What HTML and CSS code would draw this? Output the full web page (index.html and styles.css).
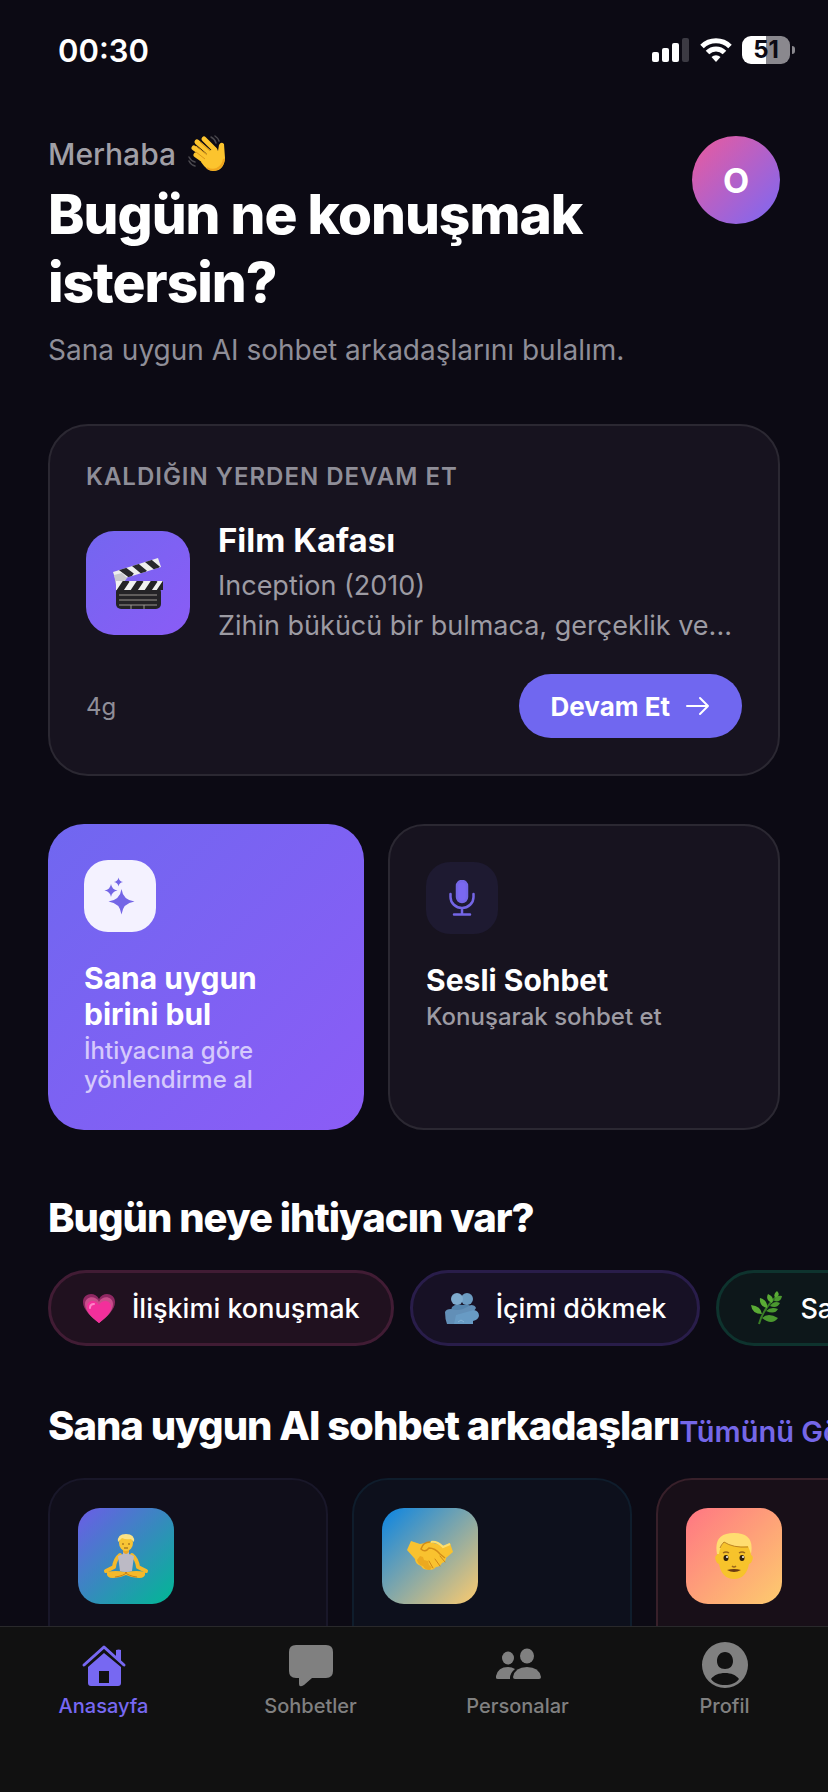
FILE: index.html
```html
<!DOCTYPE html>
<html lang="tr">
<head>
    <meta charset="UTF-8">
    <meta name="viewport" content="width=device-width, initial-scale=1.0">
    <title>Anasayfa</title>
    <link rel="stylesheet" href="styles.css">
</head>
<body>
    <div class="app">
        <div class="status-bar">
            <span class="time">00:30</span>
            <div class="status-icons">
                <svg width="38" height="24" viewBox="0 0 38 24" fill="#fff">
                    <rect x="0" y="14" width="7" height="10" rx="2"/>
                    <rect x="10" y="10" width="7" height="14" rx="2"/>
                    <rect x="20" y="5" width="7" height="19" rx="2"/>
                    <rect x="30" y="0" width="7" height="24" rx="2" fill="#3c3a43"/>
                </svg>
                <svg width="32" height="26" viewBox="0 0 32 26" fill="none" stroke="#fff" stroke-width="5">
                    <path d="M2 9.500a20 20 0 0 1 28 0"/>
                    <path d="M7.500 15.500a12 12 0 0 1 17 0"/>
                    <path d="M16 25l-4.500-5a6.500 6.500 0 0 1 9 0z" fill="#fff" stroke="none"/>
                </svg>
                <div class="battery"><span>51</span></div>
            </div>
        </div>

        <main>
            <header class="header">
                <div>
                    <p class="hello">Merhaba
                        <svg width="38" height="38" viewBox="0 0 38 38">
                            <path d="M27 15L16 4M23 19L9 7M20 23L6 13M18 27L8 20" stroke="#fcc42e" stroke-width="5" fill="none" stroke-linecap="round"/>
                            <path d="M17 20L27 12l3 4 1-6q2-4 5-1l1 14q-1 13-12 13-6 0-12-9z" fill="#fcc42e"/>
                            <path d="M22 16L12 7M19 20L8 11M17 24L8 17" stroke="#dc9718" stroke-width="1" fill="none"/>
                            <path d="M19 33q5 3 10 1 6-3 7-10" stroke="#f0a51d" stroke-width="2" fill="none"/>
                            <path d="M23 2q4 2 5 6M27 1q3 2 4 5M1 26q2 4 6 5M1 22q2 4 6 5" stroke="#4a484e" stroke-width="1.500" fill="none" stroke-linecap="round"/>
                        </svg>
                    </p>
                    <h1>Bugün ne konuşmak istersin?</h1>
                    <p class="subtitle">Sana uygun AI sohbet arkadaşlarını bulalım.</p>
                </div>
                <button class="avatar">O</button>
            </header>

            <section class="continue card">
                <h2 class="label">KALDIĞIN YERDEN DEVAM ET</h2>
                <div class="continue-body">
                    <div class="film-icon">
                        <svg width="52" height="56" viewBox="0 0 52 56">
                            <defs>
                                <clipPath id="clap-top"><path d="M1 17L46 3l3 9L4 26z"/></clipPath>
                                <clipPath id="clap-bar"><rect x="4" y="26" width="47" height="9"/></clipPath>
                            </defs>
                            <path d="M1 17L46 3l3 9L4 26z" fill="#eee"/>
                            <path d="M8 12l12 9M21 8l12 10M34 4l12 10" stroke="#29292d" stroke-width="6" clip-path="url(#clap-top)"/>
                            <path d="M2 20l8-2 5 5-5 7H4z" fill="#c9c9ce"/>
                            <rect x="4" y="32" width="45" height="22" rx="5" fill="#242326"/>
                            <g clip-path="url(#clap-bar)">
                                <rect x="4" y="26" width="47" height="9" fill="#f1f1f1"/>
                                <path d="M7 37l8-12M21 37l8-12M35 37l8-12M47 37l8-12" stroke="#242326" stroke-width="6"/>
                            </g>
                            <path d="M7 40h38M7 45h38M7 50h38M19 50v4M32 50v4" stroke="#9b9790" stroke-width="1"/>
                        </svg>
                    </div>
                    <div class="continue-text">
                        <h3>Film Kafası</h3>
                        <p>Inception (2010)</p>
                        <p>Zihin bükücü bir bulmaca, gerçeklik ve...</p>
                    </div>
                </div>
                <div class="continue-footer">
                    <span class="ago">4g</span>
                    <button class="continue-btn">Devam Et
                        <svg width="24" height="20" viewBox="0 0 24 20" fill="none" stroke="#fff" stroke-width="2" stroke-linecap="round" stroke-linejoin="round">
                            <path d="M1 10h21M14 2l8 8-8 8"/>
                        </svg>
                    </button>
                </div>
            </section>

            <section class="actions">
                <a href="#" class="action primary">
                    <span class="action-icon">
                        <svg width="40" height="40" viewBox="0 0 40 40" fill="#7466e6">
                            <path d="M21.500 13q1.500 11 13 12.500q-11.500 1.500-13 13q-1.500-11.500-13-13q11.500-1.500 13-12.500z"/>
                            <path d="M11 8q.8 5.500 6.500 6.500q-5.700 1-6.500 6.500q-.8-5.500-6.500-6.500q5.700-1 6.500-6.500z"/>
                            <path d="M18.500 1.500q.6 3.800 4.500 4.500q-3.900.7-4.500 4.500q-.6-3.800-4.500-4.500q3.900-.7 4.500-4.500z"/>
                        </svg>
                    </span>
                    <h3>Sana uygun birini bul</h3>
                    <p>İhtiyacına göre yönlendirme al</p>
                </a>
                <a href="#" class="action card">
                    <span class="action-icon">
                        <svg width="26" height="36" viewBox="0 0 26 36" fill="none" stroke="#7466e6" stroke-width="2.500" stroke-linecap="round">
                            <rect x="8" y="1" width="10" height="21" rx="5" fill="#7a68f0"/>
                            <path d="M1.500 14v3a11.500 11 0 0 0 23 0v-3M13 28v6M5 34.500h16"/>
                        </svg>
                    </span>
                    <h3>Sesli Sohbet</h3>
                    <p>Konuşarak sohbet et</p>
                </a>
            </section>

            <h2 class="section-title needs-title">Bugün neye ihtiyacın var?</h2>
            <div class="chips">
                <button class="chip pink">
                    <svg width="34" height="34" viewBox="0 0 34 34">
                        <path d="M17 32C9 25 1 19 1 11c0-9 12-11 16-3 4-8 16-6 16 3 0 8-8 14-16 21z" fill="#8e2862"/>
                        <path d="M17 32C9 26 3 20 3 13c0-8 11-9 14-2 3-7 14-6 14 2 0 7-6 13-14 19z" fill="#c94d8b"/>
                        <path d="M17 32C10 26 5 22 5 16c0-7 9-8 12-2 3-6 12-5 12 2 0 6-5 10-12 16z" fill="#f32f9b"/>
                        <path d="M8 17q0-4 4-4" stroke="#ff83c8" stroke-width="2" fill="none" stroke-linecap="round"/>
                    </svg>
                    İlişkimi konuşmak
                </button>
                <button class="chip violet">
                    <svg width="36" height="34" viewBox="0 0 36 34">
                        <path d="M8 16q4-4 10-2 7-2 11 3l2 9H5z" fill="#5484ad"/>
                        <circle cx="23" cy="8" r="6" fill="#6c9cc2"/>
                        <circle cx="13" cy="8" r="6" fill="#7eabce"/>
                        <path d="M1 21q1-3 6-3 6 2 12 0l8-4q4 0 5 3-2 4-9 6l-6 4v6H3q-2-5-2-12z" fill="#628fb7"/>
                        <path d="M12 24l18-5q5 1 5 6-1 4-6 5v3H10z" fill="#689bc4"/>
                        <path d="M14 31l3-2 3 2" stroke="#86b4d5" fill="none"/>
                    </svg>
                    İçimi dökmek
                </button>
                <button class="chip green">
                    <svg width="34" height="34" viewBox="0 0 34 34" fill="#5aab35">
                        <path d="M9 33Q13 18 27 5" stroke="#397d26" stroke-width="2" fill="none"/>
                        <path d="M26 7q-4-3 1-7 4 4-1 7zM22 12q-7-3-4-9 7 3 4 9zM17 17q-8-2-7-10 8 2 7 10zM12 23q-10 0-11-9 10 1 11 9z"/>
                        <path d="M24 10q2-6 8-5-1 7-8 5zM20 15q4-6 10-3-3 6-10 3zM16 20q5-5 12-2-3 6-12 2zM12 27q6-6 16 0-6 8-16 0z" fill="#4b982f"/>
                    </svg>
                    Sakinleşmek
                </button>
            </div>

            <div class="section-head">
                <h2 class="section-title">Sana uygun AI sohbet arkadaşları</h2>
                <a href="#">Tümünü Gör</a>
            </div>
            <div class="personas">
                <article class="persona indigo">
                    <div class="persona-icon">
                        <svg width="46" height="46" viewBox="0 0 46 46">
                            <path d="M17 22Q12 26 11 34L3 38M29 22Q34 26 35 34l8 4" stroke="#f5b92b" stroke-width="4" fill="none" stroke-linecap="round" stroke-linejoin="round"/>
                            <path d="M4 39q8-2 19 0 11-2 19 0 1 6-6 6-7 0-13-3-6 3-13 3-7 0-6-6z" fill="#f5b92b"/>
                            <path d="M12 44q9-1 12-5M34 44q-9-1-12-5" stroke="#c98018" fill="none"/>
                            <path d="M20 16h6v5l5 2-2 15q-6 2-12 0l-2-15 5-2z" fill="#bcbac5"/>
                            <path d="M20 15h6v4q-3 4-6 0z" fill="#e9a825"/>
                            <ellipse cx="23" cy="10" rx="7" ry="8" fill="#f7c535"/>
                            <path d="M15 9Q14 1 23 1t8 8l-3-3q-5 1-9-1z" fill="#fce385"/>
                            <path d="M19 11h2M25 11h2M21 15h4" stroke="#8b5a18"/>
                        </svg>
                    </div>
                </article>
                <article class="persona blue">
                    <div class="persona-icon">
                        <svg width="48" height="34" viewBox="0 0 48 34">
                            <path d="M5 2l9 3 10-2 14 4 6-3 3 9-7 6q0 4-4 5-2 4-6 4-3 4-7 2-5 2-8-3-6-2-6-7L1 11z" fill="#f9c22f"/>
                            <path d="M34 17l5 6M29 20l5 7M23 22l4 7" stroke="#cf8617" stroke-width="1" stroke-linecap="round"/>
                            <path d="M11 21l3-4 3 1 1 3 4 1 1 4 3 2-2 3q-5 0-7-4-5-1-6-6z" fill="#eca920"/>
                            <path d="M24 3q-7 0-9 7 4 4 8-1 6 0 11 6l5 4" stroke="#d38d17" stroke-width="1.500" fill="none"/>
                            <path d="M25 3q6-1 12 5l7-3" stroke="#ffdf6c" stroke-width="2" fill="none"/>
                        </svg>
                    </div>
                </article>
                <article class="persona red">
                    <div class="persona-icon">
                        <svg width="40" height="48" viewBox="0 0 40 48">
                            <path d="M3 15q0-13 17-13t17 13v8q3 1 1 6-1 3-3 3-3 15-15 15T5 32q-2 0-3-3-2-5 1-6z" fill="#f7c32b"/>
                            <path d="M3 22Q-1 1 20 1t17 21l-3-8Q19 16 10 10q-4 5-5 12z" fill="#ffdd70"/>
                            <path d="M6 16q1-3 4-6 9 6 24 5" stroke="#bd8421" fill="none"/>
                            <ellipse cx="12" cy="26" rx="2.500" ry="3" fill="#30200c"/>
                            <ellipse cx="28" cy="26" rx="2.500" ry="3" fill="#30200c"/>
                            <circle cx="13" cy="25" r="1" fill="#fff"/>
                            <circle cx="29" cy="25" r="1" fill="#fff"/>
                            <path d="M9 21q3-2 6 0M25 21q3-2 6 0M18 34q2 2 4 0" stroke="#9b681c" stroke-width="1.500" fill="none"/>
                            <path d="M13 38q7-2 14 0-7 4-14 0z" fill="#6b3c12"/>
                        </svg>
                    </div>
                </article>
            </div>
        </main>

        <nav class="tab-bar">
            <a href="#" class="active">
                <svg width="48" height="48" viewBox="0 0 48 48" fill="currentColor">
                    <path d="M4 24L24 6l20 18" fill="none" stroke="currentColor" stroke-width="3" stroke-linecap="round" stroke-linejoin="round"/>
                    <path d="M36 9q3-1 5 0v12l-5-4z"/>
                    <path fill-rule="evenodd" d="M8 26L24 12l17 14v16q0 3-3 3H11q-3 0-3-3zm11 4v12h10V30z"/>
                </svg>
                Anasayfa
            </a>
            <a href="#">
                <svg width="48" height="48" viewBox="0 0 48 48" fill="currentColor">
                    <path d="M9 4h30q7 0 7 7v19q0 7-7 7H25l-8 7q-5 3-5-1v-6H9q-7 0-7-7V11q0-7 7-7z"/>
                </svg>
                Sohbetler
            </a>
            <a href="#">
                <svg width="48" height="48" viewBox="0 0 48 48" fill="currentColor">
                    <ellipse cx="14" cy="17" rx="6" ry="6.500"/>
                    <ellipse cx="33" cy="15" rx="7" ry="7.500"/>
                    <path d="M2 37v-2q2-9 12-9 4 0 7 2-5 4-5 9v1H4q-2 0-2-1z"/>
                    <path d="M19 36q2-10 14-10t14 10q0 2-2 2H21q-2 0-2-2z"/>
                </svg>
                Personalar
            </a>
            <a href="#">
                <svg width="48" height="48" viewBox="0 0 48 48" fill="currentColor">
                    <path fill-rule="evenodd" d="M24 1a23 23 0 1 0 0 46 23 23 0 0 0 0-46zm0 10c5 0 8 4 8 9s-3 8-8 8-8-3-8-8 3-9 8-9zm0 21c6 0 11 2 14 6-3 4-8 6-14 6s-11-2-14-6c3-4 8-6 14-6z"/>
                </svg>
                Profil
            </a>
        </nav>
    </div>
</body>
</html>
```
FILE: styles.css
```css
* {
    box-sizing: border-box;
}
body, html {
    height: 100%;
    margin: 0;
}
body {
    background-color: #0c0a14;
    color: #fff;
    font-family: Inter, 'Noto Sans', sans-serif;
}
h1, h2, h3, p {
    margin: 0;
}
a {
    color: inherit;
    text-decoration: none;
}
button {
    border: none;
    color: #fff;
    font-family: inherit;
    cursor: pointer;
}
svg {
    flex-shrink: 0;
}
.app {
    height: 100vh;
    display: flex;
    flex-direction: column;
}
.status-bar {
    display: flex;
    justify-content: space-between;
    align-items: center;
    height: 100px;
    padding: 0 32px 0 58px;
    flex-shrink: 0;
}
.time {
    font-size: 31px;
    font-weight: 600;
}
.status-icons {
    display: flex;
    align-items: center;
    gap: 10px;
}
.battery {
    position: relative;
    width: 48px;
    height: 28px;
    margin-right: 6px;
    border-radius: 9px;
    background: linear-gradient(to right, #fff 50%, #8a888e 50%);
    color: #0c0a14;
    font-size: 24px;
    font-weight: 700;
    line-height: 28px;
    text-align: center;
}
.battery::after {
    content: '';
    position: absolute;
    right: -5px;
    top: 10px;
    width: 3px;
    height: 8px;
    border-radius: 0 4px 4px 0;
    background-color: #8a888e;
}
main {
    flex: 1;
    min-height: 0;
    overflow: hidden;
    padding: 36px 48px 0;
}

/* header */
.header {
    display: flex;
    justify-content: space-between;
    align-items: flex-start;
    margin-bottom: 54px;
}
.hello {
    display: flex;
    align-items: center;
    gap: 12px;
    height: 36px;
    color: #a09fa6;
    font-size: 30px;
    font-weight: 500;
}
h1 {
    font-size: 55px;
    font-weight: 800;
    line-height: 68px;
    letter-spacing: -1px;
    padding-top: 8px;
}
.subtitle {
    padding-top: 14px;
    color: #8f8e98;
    font-size: 28px;
    line-height: 40px;
}
.avatar {
    flex-shrink: 0;
    width: 88px;
    height: 88px;
    padding: 0;
    border-radius: 50%;
    background: linear-gradient(135deg, #ec5a9c, #7a68f5);
    font-size: 34px;
    font-weight: 700;
}

/* continue card */
.card {
    border: 2px solid #2b2832;
    background-color: #17131f;
}
.continue {
    padding: 36px;
    border-radius: 40px;
    margin-bottom: 48px;
}
.label {
    color: #8f8e98;
    font-size: 24px;
    font-weight: 600;
    line-height: 30px;
    letter-spacing: 1px;
}
.continue-body {
    display: flex;
    align-items: center;
    gap: 28px;
    margin: 28px 0;
}
.film-icon {
    display: flex;
    justify-content: center;
    align-items: center;
    flex-shrink: 0;
    width: 104px;
    height: 104px;
    border-radius: 28px;
    background: linear-gradient(135deg, #7466f0, #8a5cf6);
}
.continue-text {
    flex: 1;
    min-width: 0;
}
.continue-text h3 {
    margin-bottom: 6px;
    font-size: 33px;
    font-weight: 700;
    line-height: 40px;
}
.continue-text p {
    color: #9d9ba3;
    font-size: 27px;
    line-height: 40px;
    white-space: nowrap;
    overflow: hidden;
    text-overflow: ellipsis;
}
.continue-footer {
    display: flex;
    justify-content: space-between;
    align-items: center;
}
.ago {
    color: #8f8e98;
    font-size: 24px;
}
.continue-btn {
    display: flex;
    align-items: center;
    gap: 16px;
    height: 64px;
    padding: 0 32px;
    border-radius: 32px;
    background-color: #7067f0;
    font-size: 26px;
    font-weight: 700;
}

/* quick actions */
.actions {
    display: grid;
    grid-template-columns: 1fr 1.24fr;
    gap: 24px;
}
.action {
    padding: 36px;
    border-radius: 36px;
}
.action.primary {
    background: linear-gradient(135deg, #7067f0, #8b5cf6);
}
.action-icon {
    display: flex;
    justify-content: center;
    align-items: center;
    width: 72px;
    height: 72px;
    margin-bottom: 28px;
    border-radius: 24px;
    background-color: #1e1a31;
}
.primary .action-icon {
    background-color: #f4f2ff;
}
.action h3 {
    font-size: 30px;
    font-weight: 700;
    line-height: 36px;
}
.action p {
    padding-top: 4px;
    color: #9d9ba3;
    font-size: 24px;
    font-weight: 500;
    line-height: 29px;
}
.primary p {
    color: #d5c9fc;
}

/* needs */
.section-title {
    font-size: 40px;
    font-weight: 800;
    line-height: 48px;
    letter-spacing: -1px;
    white-space: nowrap;
}
.needs-title {
    margin: 64px 0 28px;
}
.chips, .personas {
    display: flex;
    margin-right: -48px;
    overflow: hidden;
}
.chips {
    gap: 16px;
}
.chip {
    display: flex;
    align-items: center;
    flex-shrink: 0;
    gap: 16px;
    height: 76px;
    padding: 0 31px;
    border: 3px solid;
    border-radius: 38px;
    font-size: 27px;
    font-weight: 500;
    white-space: nowrap;
}
.chip.pink {
    background-color: #20111f;
    border-color: #411c34;
}
.chip.violet {
    background-color: #171125;
    border-color: #291d4a;
}
.chip.green {
    background-color: #0d171a;
    border-color: #0e332e;
}

/* personas */
.section-head {
    display: flex;
    align-items: flex-end;
    margin: 56px -48px 28px 0;
    overflow: hidden;
    white-space: nowrap;
}
.section-head a {
    color: #7567e8;
    font-size: 29px;
    font-weight: 600;
    line-height: 36px;
}
.personas {
    gap: 24px;
}
.persona {
    flex: 0 0 280px;
    min-height: 340px;
    padding: 28px;
    border: 2px solid;
    border-radius: 36px;
}
.persona-icon {
    display: flex;
    justify-content: center;
    align-items: center;
    width: 96px;
    height: 96px;
    border-radius: 22px;
}
.persona.indigo {
    background-color: #100e1a;
    border-color: #191729;
}
.persona.blue {
    background-color: #0d101c;
    border-color: #0f1d2c;
}
.persona.red {
    background-color: #180f18;
    border-color: #38202a;
}
.indigo .persona-icon {
    background: linear-gradient(135deg, #6c5ce7, #00b894);
}
.blue .persona-icon {
    background: linear-gradient(135deg, #0984e3, #fdcb6e);
}
.red .persona-icon {
    background: linear-gradient(135deg, #ff7683, #fdcb6e);
}

/* bottom tabs */
.tab-bar {
    display: grid;
    grid-template-columns: repeat(4, 1fr);
    flex-shrink: 0;
    height: 166px;
    padding-top: 14px;
    border-top: 1px solid #29292b;
    background-color: #111;
}
.tab-bar a {
    display: flex;
    flex-direction: column;
    align-items: center;
    gap: 5px;
    color: #808080;
    font-size: 20px;
    font-weight: 500;
    line-height: 24px;
}
.tab-bar a.active {
    color: #7768f2;
}
```
